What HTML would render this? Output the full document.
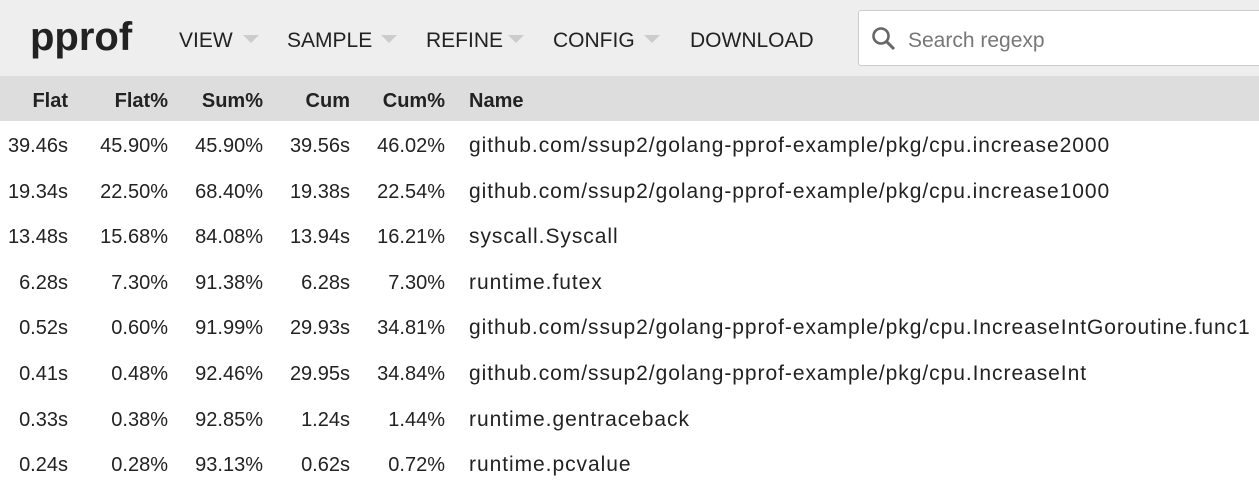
<!DOCTYPE html>
<html><head><meta charset="utf-8"><style>
body{margin:0;width:1259px;height:481px;overflow:hidden;background:#fff;font-family:"Liberation Sans",sans-serif;color:#222;position:relative}
.hdr{position:absolute;left:0;top:0;width:1259px;height:76px;background:#eee}
.logo{position:absolute;left:30px;top:15px;font-size:40px;font-weight:bold;color:#222}
.m{position:absolute;top:29px;font-size:21px;color:#222}
.arr{position:absolute;top:35px;width:0;height:0;border-left:8px solid transparent;border-right:8px solid transparent;border-top:8px solid #ccc}
.search{position:absolute;left:858px;top:10px;width:420px;height:54px;background:#fff;border:1px solid #ccc;border-radius:3px}
.search span{position:absolute;left:49px;top:18px;font-size:21px;color:#777}
.th{position:absolute;left:0;top:76px;width:1259px;height:45px;background:#ddd}
.c{position:absolute;font-size:20px;white-space:nowrap}
.n{font-size:21px;letter-spacing:0.95px}
.r{text-align:right}
</style></head><body>
<div class="hdr">
<div class="logo">pprof</div>
<div class="m" style="left:179px">VIEW</div><div class="arr" style="left:243px"></div>
<div class="m" style="left:287px">SAMPLE</div><div class="arr" style="left:381px"></div>
<div class="m" style="left:426px">REFINE</div><div class="arr" style="left:508px"></div>
<div class="m" style="left:553px">CONFIG</div><div class="arr" style="left:644px"></div>
<div class="m" style="left:690px">DOWNLOAD</div>
<div class="search"><svg style="position:absolute;left:12px;top:15px" width="26" height="26" viewBox="0 0 26 26"><circle cx="10" cy="10" r="7.5" fill="none" stroke="#666" stroke-width="2.6"/><path d="M15.5 15.5L23 23" stroke="#666" stroke-width="3"/></svg><span>Search regexp</span></div>
</div>
<div class="th"></div>
<div id="t"></div>
<script>
var cols=[68,168,263,350,445];
var hd=["Flat","Flat%","Sum%","Cum","Cum%"];
var rows=[["39.46s","45.90%","45.90%","39.56s","46.02%","github.com/ssup2/golang-pprof-example/pkg/cpu.increase2000"],
["19.34s","22.50%","68.40%","19.38s","22.54%","github.com/ssup2/golang-pprof-example/pkg/cpu.increase1000"],
["13.48s","15.68%","84.08%","13.94s","16.21%","syscall.Syscall"],
["6.28s","7.30%","91.38%","6.28s","7.30%","runtime.futex"],
["0.52s","0.60%","91.99%","29.93s","34.81%","github.com/ssup2/golang-pprof-example/pkg/cpu.IncreaseIntGoroutine.func1"],
["0.41s","0.48%","92.46%","29.95s","34.84%","github.com/ssup2/golang-pprof-example/pkg/cpu.IncreaseInt"],
["0.33s","0.38%","92.85%","1.24s","1.44%","runtime.gentraceback"],
["0.24s","0.28%","93.13%","0.62s","0.72%","runtime.pcvalue"]];
var h="";
for(var i=0;i<5;i++)h+='<div class="c r" style="font-weight:bold;right:'+(1259-cols[i])+'px;top:90px">'+hd[i]+'</div>';
h+='<div class="c" style="font-weight:bold;left:469px;top:90px">Name</div>';
for(var j=0;j<rows.length;j++){var y=135+j*45.6;
for(var i=0;i<5;i++)h+='<div class="c r" style="right:'+(1259-cols[i])+'px;top:'+y+'px">'+rows[j][i]+'</div>';
h+='<div class="c n" style="left:469px;top:'+(y-1)+'px">'+rows[j][5]+'</div>';}
document.getElementById("t").innerHTML=h;
</script>
</body></html>
